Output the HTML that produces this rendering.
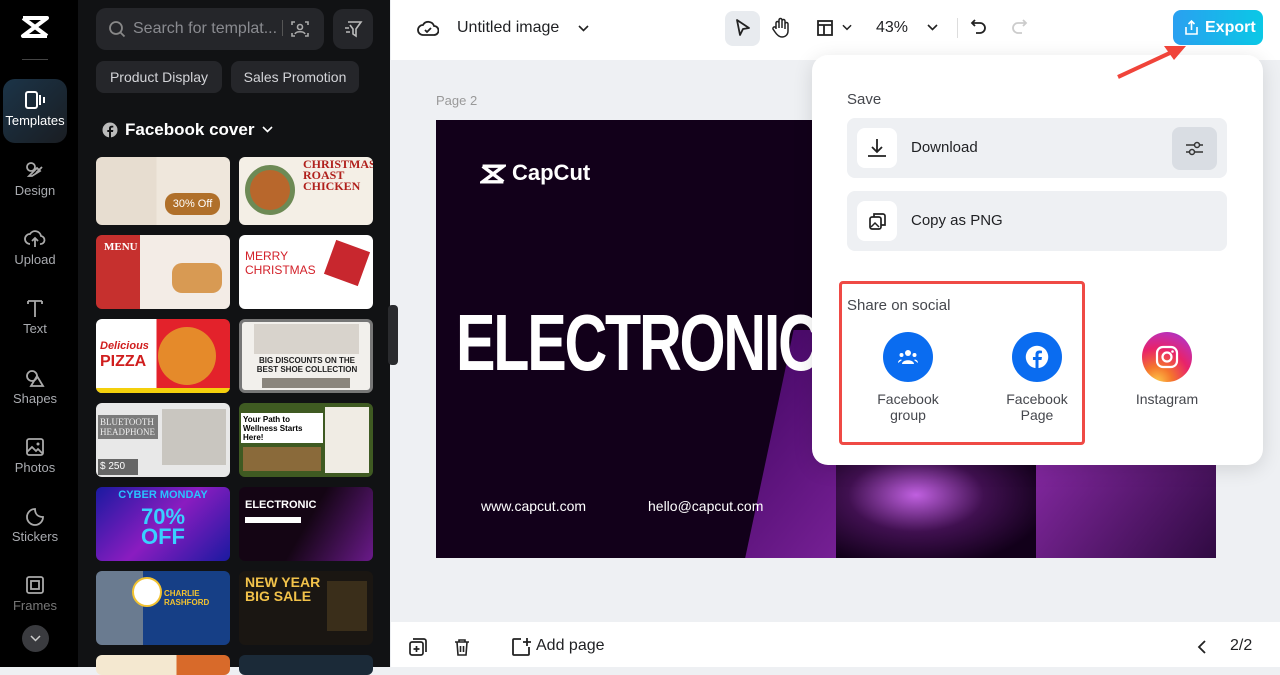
<!DOCTYPE html>
<html><head><meta charset="utf-8"><style>
*{box-sizing:border-box;margin:0;padding:0}
body{width:1280px;height:667px;overflow:hidden;font-family:"Liberation Sans",sans-serif;background:#eef0f3;position:relative}
.abs{position:absolute}
.rail{left:0;top:0;width:78px;height:667px;background:#000}
.ri{position:absolute;left:0;width:70px;text-align:center;color:#a9abb0;font-size:13px}
.ri svg{display:block;margin:0 auto 3px}
.panel{left:78px;top:0;width:312px;height:667px;background:#111214}
.chip{position:absolute;top:61px;height:32px;border-radius:8px;background:#25262a;color:#d3d4d8;font-size:14px;line-height:32px;text-align:center}
.th{position:absolute;width:134px;border-radius:6px;overflow:hidden}
.top{left:391px;top:0;width:889px;height:60px;background:#fff}
.bot{left:391px;top:622px;width:889px;height:45px;background:#fff}
.pop{left:812px;top:55px;width:451px;height:410px;background:#fff;border-radius:16px;box-shadow:0 4px 20px rgba(0,0,0,.12)}
.row{position:absolute;left:35px;width:380px;height:60px;background:#eef0f3;border-radius:8px}
.ib{position:absolute;left:10px;top:10px;width:40px;height:40px;border-radius:8px;background:#fff}
.lbl{position:absolute;left:64px;top:0;line-height:60px;font-size:15px;color:#1f2023}
.soc{position:absolute;width:100px;text-align:center;font-size:14px;color:#45474d;line-height:16px}
.circ{width:50px;height:50px;border-radius:50%;margin:0 auto 9px;background:#0a6cf0;display:flex;align-items:center;justify-content:center}
</style></head><body>
<div class="abs rail">
 <svg class="abs" style="left:20px;top:15px" width="30" height="24" viewBox="0 0 30 24"><path d="M3 3h24L3 21h24M3 3l24 18" stroke="#fff" stroke-width="4" fill="none" stroke-linejoin="round"/></svg>
 <div class="abs" style="left:22px;top:59px;width:26px;height:1px;background:#444"></div>
 <div class="abs" style="left:3px;top:79px;width:64px;height:64px;border-radius:12px;background:linear-gradient(135deg,#1b3448,#1a1d22)"></div>
 <div class="ri" style="top:90px;color:#fff"><svg width="22" height="20" viewBox="0 0 22 20"><rect x="2" y="2" width="11" height="16" rx="2" stroke="#fff" stroke-width="2" fill="none"/><path d="M16 5v10M20 7v6" stroke="#fff" stroke-width="2"/></svg>Templates</div>
 <div class="ri" style="top:160px"><svg width="22" height="20" viewBox="0 0 22 20"><circle cx="7" cy="7" r="4" stroke="#aaa" stroke-width="1.8" fill="none"/><path d="M12 13l6-6M5 16l8-8 3 3-8 5z" stroke="#aaa" stroke-width="1.8" fill="none"/></svg>Design</div>
 <div class="ri" style="top:229px"><svg width="22" height="20" viewBox="0 0 22 20"><path d="M6 15a5 5 0 010-10 6 6 0 0111 2 4 4 0 01-1 8M11 9v9M8 12l3-3 3 3" stroke="#aaa" stroke-width="1.8" fill="none"/></svg>Upload</div>
 <div class="ri" style="top:298px"><svg width="22" height="20" viewBox="0 0 22 20"><path d="M4 3h14M11 3v16M4 3v3M18 3v3" stroke="#aaa" stroke-width="1.8" fill="none"/></svg>Text</div>
 <div class="ri" style="top:368px"><svg width="22" height="20" viewBox="0 0 22 20"><circle cx="8" cy="8" r="5" stroke="#aaa" stroke-width="1.8" fill="none"/><path d="M13 8l6 10H7z" stroke="#aaa" stroke-width="1.8" fill="none"/></svg>Shapes</div>
 <div class="ri" style="top:437px"><svg width="22" height="20" viewBox="0 0 22 20"><rect x="3" y="2" width="16" height="16" rx="2" stroke="#aaa" stroke-width="1.8" fill="none"/><path d="M3 15l5-5 4 4 2-2 5 5" stroke="#aaa" stroke-width="1.8" fill="none"/><circle cx="14" cy="7" r="1.5" fill="#aaa"/></svg>Photos</div>
 <div class="ri" style="top:506px"><svg width="22" height="20" viewBox="0 0 22 20"><path d="M19 11A8 8 0 1111 3c0 5 3 8 8 8z" stroke="#aaa" stroke-width="1.8" fill="none"/></svg>Stickers</div>
 <div class="ri" style="top:575px;color:#777"><svg width="22" height="20" viewBox="0 0 22 20"><rect x="3" y="2" width="16" height="16" rx="2" stroke="#aaa" stroke-width="1.8" fill="none"/><rect x="7" y="6" width="8" height="8" stroke="#aaa" stroke-width="1.8" fill="none"/></svg>Frames</div>
 <div class="abs" style="left:22px;top:625px;width:27px;height:27px;border-radius:50%;background:#3a3b3f"><svg style="position:absolute;left:8px;top:10px" width="11" height="7" viewBox="0 0 11 7"><path d="M1 1l4.5 4.5L10 1" stroke="#ccc" stroke-width="1.5" fill="none"/></svg></div>
</div>
<div class="abs panel">
 <div class="abs" style="left:18px;top:8px;width:228px;height:42px;border-radius:10px;background:#25262a"></div>
 <svg class="abs" style="left:30px;top:20px" width="18" height="18" viewBox="0 0 18 18"><circle cx="8" cy="8" r="6" stroke="#888" stroke-width="1.8" fill="none"/><path d="M12.5 12.5l4 4" stroke="#888" stroke-width="1.8"/></svg>
 <div class="abs" style="left:55px;top:20px;font-size:16px;color:#8a8b90">Search for templat...</div>
 <div class="abs" style="left:204px;top:20px;width:1px;height:16px;background:#555"></div>
 <svg class="abs" style="left:212px;top:19px" width="20" height="20" viewBox="0 0 20 20"><path d="M2 6V3h3M15 3h3v3M18 14v3h-3M5 17H2v-3" stroke="#aaa" stroke-width="1.6" fill="none"/><circle cx="10" cy="8" r="2.5" stroke="#aaa" stroke-width="1.6" fill="none"/><path d="M5 15c1-3 9-3 10 0" stroke="#aaa" stroke-width="1.6" fill="none"/></svg>
 <div class="abs" style="left:255px;top:9px;width:40px;height:40px;border-radius:10px;background:#25262a"></div>
 <svg class="abs" style="left:265px;top:19px" width="20" height="20" viewBox="0 0 20 20"><path d="M5 3h13l-5 7v7l-3-2v-5L7 6" stroke="#bbb" stroke-width="1.6" fill="none"/><path d="M2 9h4M3 13h4" stroke="#bbb" stroke-width="1.6"/></svg>
 <div class="chip" style="left:18px;width:126px">Product Display</div>
 <div class="chip" style="left:153px;width:128px">Sales Promotion</div>
 <svg class="abs" style="left:24px;top:122px" width="16" height="16" viewBox="0 0 16 16"><circle cx="8" cy="8" r="7.5" fill="#bbb"/><path d="M9 16v-6h2l.3-2H9V6.5c0-.6.3-1 1-1h1.3V3.8A10 10 0 009.6 3.7C8 3.7 7 4.6 7 6.3V8H5.3v2H7v6z" fill="#111214"/></svg>
 <div class="abs" style="left:47px;top:120px;font-size:17px;font-weight:bold;color:#fff">Facebook cover</div>
 <svg class="abs" style="left:184px;top:126px" width="11" height="7" viewBox="0 0 11 7"><path d="M1 1l4.5 4.5L10 1" stroke="#fff" stroke-width="1.6" fill="none"/></svg>
 <div class="th" style="left:18px;top:157px;height:68px;background:linear-gradient(90deg,#e7ddd0 45%,#efe7dc 45%)"><div style="position:absolute;right:10px;top:36px;width:55px;height:22px;border-radius:10px;background:#b0702a;color:#fff;font-size:11px;text-align:center;line-height:22px">30% Off</div></div>
 <div class="th" style="left:161px;top:157px;height:68px;background:#f4efe6"><div style="position:absolute;left:6px;top:8px;width:50px;height:50px;border-radius:50%;background:#b8672c;border:5px solid #6d8a55"></div><div style="position:absolute;left:64px;top:2px;color:#b0201c;font:bold 12px 'Liberation Serif',serif;line-height:11px">CHRISTMAS<br>ROAST CHICKEN</div></div>
 <div class="th" style="left:18px;top:235px;height:74px;background:linear-gradient(90deg,#c6302e 33%,#f3ece6 33%)"><div style="position:absolute;left:8px;top:6px;color:#fff;font:bold 11px 'Liberation Serif',serif">MENU</div><div style="position:absolute;right:8px;top:28px;width:50px;height:30px;border-radius:10px;background:#d89a53"></div></div>
 <div class="th" style="left:161px;top:235px;height:74px;background:#fff"><div style="position:absolute;left:6px;top:14px;color:#d3212a;font-size:12px;line-height:14px">MERRY<br>CHRISTMAS</div><div style="position:absolute;right:8px;top:10px;width:36px;height:36px;background:#c8272e;transform:rotate(20deg)"></div></div>
 <div class="th" style="left:18px;top:319px;height:74px;background:linear-gradient(90deg,#fff 45%,#e3222b 45%)"><div style="position:absolute;left:4px;top:18px;color:#d01e1e;font:bold 16px 'Liberation Sans';line-height:15px"><i style="font-size:11px">Delicious</i><br>PIZZA</div><div style="position:absolute;left:62px;top:8px;width:58px;height:58px;border-radius:50%;background:#e58a2a"></div><div style="position:absolute;left:0;bottom:0;width:100%;height:5px;background:#f4d00c"></div></div>
 <div class="th" style="left:161px;top:319px;height:74px;background:#f2f0ec;border:3px solid #777"><div style="position:absolute;left:12px;top:2px;width:105px;height:30px;background:#d8d3cc"></div><div style="position:absolute;left:10px;top:34px;font:bold 8px 'Liberation Sans';color:#222;text-align:center;width:110px">BIG DISCOUNTS ON THE BEST SHOE COLLECTION</div><div style="position:absolute;left:20px;top:56px;width:88px;height:10px;background:#8a857c"></div></div>
 <div class="th" style="left:18px;top:403px;height:74px;background:#e8e8e8"><div style="position:absolute;left:2px;top:12px;width:60px;height:24px;background:#7b7b7b;color:#eee;font:9px 'Liberation Serif';padding:2px">BLUETOOTH HEADPHONE</div><div style="position:absolute;left:66px;top:6px;width:64px;height:56px;background:#c9c6c0"></div><div style="position:absolute;left:2px;top:56px;width:40px;height:16px;background:#666;color:#fff;font-size:10px;padding:2px">$ 250</div></div>
 <div class="th" style="left:161px;top:403px;height:74px;background:#3f5a22;border:2px solid #3f5a22"><div style="position:absolute;left:0;top:8px;width:82px;height:30px;background:#fff;font:bold 8px 'Liberation Sans';padding:2px">Your Path to Wellness Starts Here!</div><div style="position:absolute;left:84px;top:2px;width:44px;height:66px;background:#f0ece4"></div><div style="position:absolute;left:2px;top:42px;width:78px;height:24px;background:#8a6a3a"></div></div>
 <div class="th" style="left:18px;top:487px;height:74px;background:linear-gradient(135deg,#1a1aa0,#8a1cc0 50%,#1a1aa0)"><div style="position:absolute;left:0;top:2px;width:100%;text-align:center;color:#29c3ff;font:bold 11px 'Liberation Sans'">CYBER MONDAY</div><div style="position:absolute;left:0;top:20px;width:100%;text-align:center;color:#39d0ff;font:bold 22px 'Liberation Sans';line-height:20px">70%<br>OFF</div></div>
 <div class="th" style="left:161px;top:487px;height:74px;background:linear-gradient(120deg,#140514 50%,#6a1a8a)"><div style="position:absolute;left:6px;top:12px;color:#fff;font:bold 11px 'Liberation Sans'">ELECTRONIC</div><div style="position:absolute;left:6px;top:30px;width:56px;height:6px;background:#fff"></div></div>
 <div class="th" style="left:18px;top:571px;height:74px;background:linear-gradient(90deg,#6a7b90 35%,#163f86 35%)"><div style="position:absolute;left:36px;top:6px;width:30px;height:30px;border-radius:50%;background:#fff;border:2px solid #f2c230"></div><div style="position:absolute;left:68px;top:18px;color:#f2c230;font:bold 8px 'Liberation Sans'">CHARLIE RASHFORD</div></div>
 <div class="th" style="left:161px;top:571px;height:74px;background:#1a1612"><div style="position:absolute;left:6px;top:4px;color:#f2c24a;font:bold 14px 'Liberation Sans';line-height:14px">NEW YEAR<br>BIG SALE</div><div style="position:absolute;right:6px;top:10px;width:40px;height:50px;background:#3a2e1a"></div></div>
 <div class="th" style="left:18px;top:655px;height:20px;background:linear-gradient(90deg,#f4e8d0 60%,#d86a2a 60%)"></div>
 <div class="th" style="left:161px;top:655px;height:20px;background:#1b2a38"></div>
</div>
<div class="abs" style="left:388px;top:305px;width:10px;height:60px;border-radius:4px;background:#2a2b2e"></div>

<div class="abs top">
 <svg class="abs" style="left:26px;top:18px" width="22" height="20" viewBox="0 0 22 20"><path d="M6 17a5 5 0 010-10 6 6 0 0111 1 4 4 0 010 9z" stroke="#222" stroke-width="1.8" fill="none"/><path d="M8 12l2 2 4-4" stroke="#222" stroke-width="1.8" fill="none"/></svg>
 <div class="abs" style="left:66px;top:19px;font-size:16px;color:#1f2023">Untitled image</div>
 <svg class="abs" style="left:187px;top:25px" width="11" height="7" viewBox="0 0 11 7"><path d="M1 1l4.5 4.5L10 1" stroke="#222" stroke-width="1.6" fill="none"/></svg>
 <div class="abs" style="left:334px;top:11px;width:35px;height:35px;border-radius:8px;background:#e8ebef"></div>
 <svg class="abs" style="left:343px;top:18px" width="18" height="20" viewBox="0 0 18 20"><path d="M3 2l12 8-6 1-3 6z" stroke="#222" stroke-width="1.8" fill="none" stroke-linejoin="round"/></svg>
 <svg class="abs" style="left:380px;top:17px" width="20" height="22" viewBox="0 0 20 22"><path d="M5 12V6a1.5 1.5 0 013 0v5V3a1.5 1.5 0 013 0v8V4a1.5 1.5 0 013 0v8V7a1.5 1.5 0 013 0v7c0 4-3 6-6 6s-5-2-7-5l-2-3a1.5 1.5 0 013-1z" stroke="#222" stroke-width="1.5" fill="none"/></svg>
 <svg class="abs" style="left:425px;top:19px" width="18" height="18" viewBox="0 0 18 18"><rect x="2" y="2" width="14" height="14" stroke="#222" stroke-width="1.8" fill="none"/><path d="M2 6h14M8 6v10" stroke="#222" stroke-width="1.8"/></svg>
 <svg class="abs" style="left:451px;top:24px" width="10" height="7" viewBox="0 0 11 7"><path d="M1 1l4.5 4.5L10 1" stroke="#222" stroke-width="1.6" fill="none"/></svg>
 <div class="abs" style="left:485px;top:19px;font-size:16px;color:#1f2023">43%</div>
 <svg class="abs" style="left:536px;top:24px" width="11" height="7" viewBox="0 0 11 7"><path d="M1 1l4.5 4.5L10 1" stroke="#222" stroke-width="1.6" fill="none"/></svg>
 <div class="abs" style="left:566px;top:18px;width:1px;height:20px;background:#ddd"></div>
 <svg class="abs" style="left:579px;top:18px" width="18" height="20" viewBox="0 0 18 20"><path d="M5 2L2 5l3 3M2 5h8a5 5 0 010 10H6" stroke="#222" stroke-width="1.8" fill="none"/></svg>
 <svg class="abs" style="left:619px;top:18px" width="18" height="20" viewBox="0 0 18 20"><path d="M13 2l3 3-3 3M16 5H8a5 5 0 000 10h4" stroke="#ccc" stroke-width="1.8" fill="none"/></svg>
 <div class="abs" style="left:782px;top:10px;width:90px;height:35px;border-radius:8px;background:linear-gradient(90deg,#2aa0f0,#0ac8e6)"></div>
 <svg class="abs" style="left:793px;top:19px" width="15" height="17" viewBox="0 0 15 17"><path d="M7.5 11V2M4.5 5l3-3 3 3M2 8v7h11V8" stroke="#fff" stroke-width="1.6" fill="none"/></svg>
 <div class="abs" style="left:814px;top:19px;font-size:16px;color:#fff;font-weight:bold">Export</div>
</div>

<div class="abs" style="left:436px;top:93px;font-size:13px;color:#999">Page 2</div>
<div class="abs" style="left:436px;top:120px;width:780px;height:438px;background:#12001a;overflow:hidden">
 <div class="abs" style="left:330px;top:210px;width:500px;height:260px;background:linear-gradient(120deg,#4a0a6a,#8a2aa8 50%,#200530);transform:skewX(-12deg)"></div>
 <div class="abs" style="left:400px;top:310px;width:200px;height:130px;background:radial-gradient(ellipse at 40% 50%,#c060e0 0,#401050 40%,#12001a 80%)"></div>
 <svg class="abs" style="left:44px;top:43px" width="26" height="22" viewBox="0 0 30 24"><path d="M3 3h24L3 21h24M3 3l24 18" stroke="#fff" stroke-width="4" fill="none"/></svg>
 <div class="abs" style="left:76px;top:40px;font-size:22px;color:#fff;font-weight:bold">CapCut</div>
 <div class="abs" style="left:20px;top:178px;font:bold 80px 'Liberation Sans',sans-serif;color:#fff;letter-spacing:-3px;transform:scaleX(.74);transform-origin:left;line-height:90px">ELECTRONIC</div>
 <div class="abs" style="left:45px;top:378px;font-size:14px;color:#fff">www.capcut.com</div>
 <div class="abs" style="left:212px;top:378px;font-size:14px;color:#fff">hello@capcut.com</div>
</div>

<div class="abs pop">
 <div class="abs" style="left:35px;top:36px;font-size:15px;color:#45474d">Save</div>
 <div class="row" style="top:63px"><div class="ib"><svg style="margin:9px" width="22" height="22" viewBox="0 0 22 22"><path d="M11 2v13M6 10l5 5 5-5M2 19h18" stroke="#222" stroke-width="1.8" fill="none"/></svg></div><div class="lbl">Download</div>
  <div style="position:absolute;right:10px;top:9px;width:45px;height:43px;border-radius:8px;background:#d9dde3"><svg style="margin:11px 12px" width="21" height="21" viewBox="0 0 21 21"><path d="M2 7h17M2 14h17" stroke="#333" stroke-width="1.5"/><circle cx="13" cy="7" r="2.5" fill="#d9dde3" stroke="#333" stroke-width="1.5"/><circle cx="8" cy="14" r="2.5" fill="#d9dde3" stroke="#333" stroke-width="1.5"/></svg></div></div>
 <div class="row" style="top:136px"><div class="ib"><svg style="margin:10px" width="20" height="20" viewBox="0 0 20 20"><rect x="3" y="6" width="11" height="12" rx="2" stroke="#222" stroke-width="1.7" fill="none"/><path d="M7 6V3h9a2 2 0 012 2v9h-4" stroke="#222" stroke-width="1.7" fill="none"/><path d="M4 16l4-4 4 4" stroke="#222" stroke-width="1.5" fill="none"/></svg></div><div class="lbl">Copy as PNG</div></div>
 <div class="abs" style="left:27px;top:226px;width:246px;height:164px;border:3px solid #ef4a45;border-radius:4px"></div>
 <div class="abs" style="left:35px;top:242px;font-size:15px;color:#45474d">Share on social</div>
 <div class="soc" style="left:46px;top:277px"><div class="circ"><svg width="22" height="18" viewBox="0 0 22 18"><circle cx="11" cy="5" r="3" fill="#fff"/><circle cx="4.5" cy="7" r="2" fill="#fff"/><circle cx="17.5" cy="7" r="2" fill="#fff"/><path d="M5 16c0-5 12-5 12 0zM1 15c0-3 3-4 4-3M21 15c0-3-3-4-4-3" fill="#fff"/></svg></div>Facebook<br>group</div>
 <div class="soc" style="left:175px;top:277px"><div class="circ"><svg width="24" height="24" viewBox="0 0 16 16"><circle cx="8" cy="8" r="7.5" fill="#fff"/><path d="M9 16v-6h2l.3-2H9V6.5c0-.6.3-1 1-1h1.3V3.8A10 10 0 009.6 3.7C8 3.7 7 4.6 7 6.3V8H5.3v2H7v6z" fill="#0a6cf0"/></svg></div>Facebook<br>Page</div>
 <div class="soc" style="left:305px;top:277px"><div class="circ" style="background:radial-gradient(circle at 30% 100%,#fdc94a 0,#f5762c 25%,#e8236a 55%,#c12fb0 80%,#7a3ad0)"><svg width="26" height="26" viewBox="0 0 26 26"><rect x="3" y="3" width="20" height="20" rx="6" stroke="#fff" stroke-width="2.2" fill="none"/><circle cx="13" cy="13" r="4.5" stroke="#fff" stroke-width="2.2" fill="none"/><circle cx="18.5" cy="7.5" r="1.3" fill="#fff"/></svg></div>Instagram</div>
</div>
<svg class="abs" style="left:1112px;top:40px;z-index:5" width="80" height="40" viewBox="0 0 80 40"><path d="M6 37L60 12" stroke="#f0443a" stroke-width="4"/><path d="M74 6L52 6l10 14z" fill="#f0443a"/></svg>

<div class="abs bot">
 <svg class="abs" style="left:17px;top:15px" width="20" height="20" viewBox="0 0 20 20"><rect x="2" y="5" width="13" height="13" rx="2" stroke="#222" stroke-width="1.7" fill="none"/><path d="M5 2h11a2 2 0 012 2v11M8.5 9v6M5.5 12h6" stroke="#222" stroke-width="1.7" fill="none"/></svg>
 <svg class="abs" style="left:62px;top:15px" width="18" height="20" viewBox="0 0 18 20"><path d="M2 5h14M6 5V3h6v2M4 5l1 13h8l1-13M7.5 9v6M10.5 9v6" stroke="#222" stroke-width="1.6" fill="none"/></svg>
 <svg class="abs" style="left:119px;top:14px" width="22" height="22" viewBox="0 0 22 22"><path d="M11 3H4a1 1 0 00-1 1v14a1 1 0 001 1h14a1 1 0 001-1v-7M17 2v8M13 6h8" stroke="#222" stroke-width="1.8" fill="none"/></svg>
 <div class="abs" style="left:145px;top:15px;font-size:16px;color:#1f2023">Add page</div>
 <svg class="abs" style="left:806px;top:17px" width="10" height="16" viewBox="0 0 10 16"><path d="M8 2L2 8l6 6" stroke="#222" stroke-width="1.8" fill="none"/></svg>
 <div class="abs" style="left:839px;top:15px;font-size:16px;color:#1f2023">2/2</div>
</div>
</body></html>
